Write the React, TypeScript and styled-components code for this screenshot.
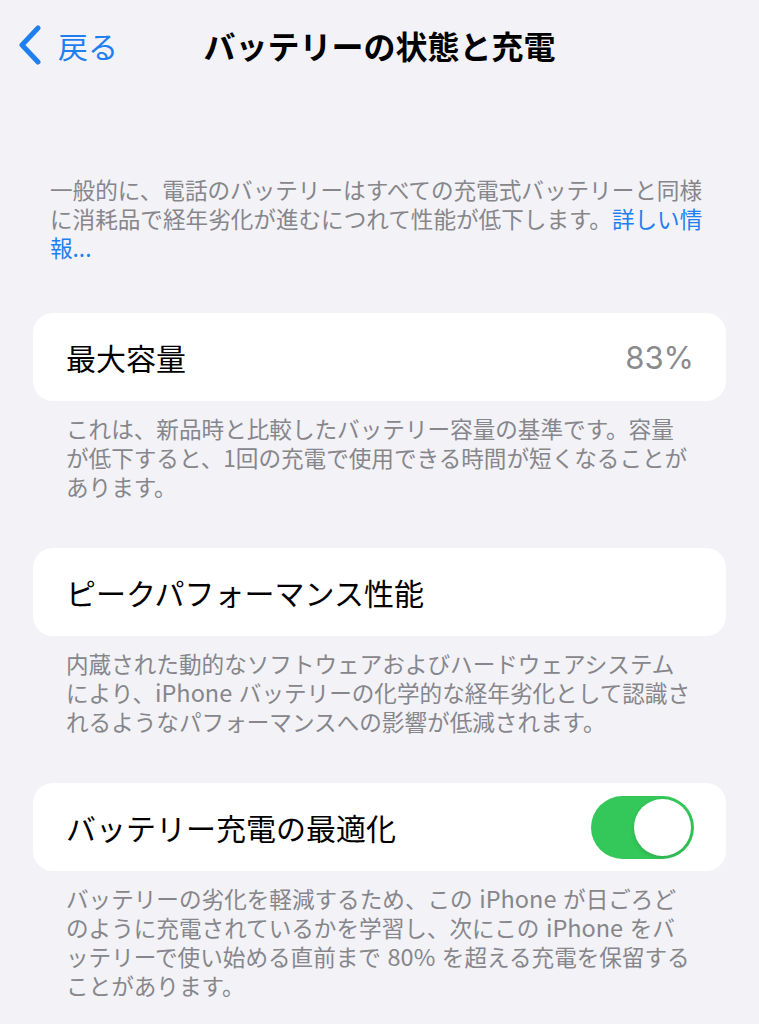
import React from "react";
import styled, { createGlobalStyle } from "styled-components";

const Global = createGlobalStyle`
  html, body {
    margin: 0;
    padding: 0;
    background: #f2f2f7;
  }
  body {
    font-family: "Noto Sans CJK JP", "Noto Sans", sans-serif;
    -webkit-font-smoothing: antialiased;
  }
`;

const Page = styled.div`
  width: 759px;
  min-height: 1024px;
  background: #f2f2f7;
  padding-bottom: 20px;
`;

const NavBar = styled.header`
  height: 90px;
  display: grid;
  grid-template-columns: 1fr auto 1fr;
  align-items: center;
`;

const Back = styled.button`
  justify-self: start;
  display: flex;
  align-items: center;
  gap: 15px;
  padding: 0 0 0 17px;
  margin: 0;
  background: none;
  border: 0;
  color: #1f7ff0;
  font-family: inherit;
  font-size: 30px;
  line-height: 1;
  cursor: pointer;
`;

const Title = styled.h1`
  margin: 0;
  font-size: 32px;
  font-weight: 700;
  color: #000;
  line-height: 1;
`;

const Intro = styled.p`
  margin: 85px 0 0;
  padding: 0 50px;
  font-size: 22.6px;
  line-height: 29px;
  color: #86868b;
`;

const Link = styled.a`
  color: #1f7ff0;
  text-decoration: none;
`;

const Sections = styled.main`
  margin-top: 51px;
  display: flex;
  flex-direction: column;
  gap: 47px;
`;

const Section = styled.section`
  display: flex;
  flex-direction: column;
`;

const Card = styled.div`
  margin: 0 33px;
  height: 88px;
  background: #fff;
  border-radius: 20px;
  padding: 0 32px 0 33px;
  display: flex;
  align-items: center;
  justify-content: space-between;
  font-size: 30px;
  color: #000;
`;

const Value = styled.span`
  color: #8a8a8e;
  font-family: Inter, "Liberation Sans", sans-serif;
  font-size: 31px;
  font-weight: 400;
`;

const Footer = styled.p`
  margin: 13px 0 0;
  padding: 0 66px;
  font-size: 22.6px;
  line-height: 29px;
  color: #86868b;
`;

const Latin = styled.span<{ $afterPunct?: boolean }>`
  margin: 0 0.28em 0 ${(p) => (p.$afterPunct ? "0" : "0.28em")};
  font-size: 23.5px;
`;

const Toggle = styled.span<{ $on: boolean }>`
  width: 103px;
  height: 63px;
  border-radius: 32px;
  background: ${(p) => (p.$on ? "#34c759" : "#e9e9ea")};
  display: flex;
  align-items: center;
  justify-content: ${(p) => (p.$on ? "flex-end" : "flex-start")};
  padding: 3px;
  box-sizing: border-box;
`;

const Knob = styled.span`
  width: 57px;
  height: 57px;
  border-radius: 50%;
  background: #fff;
  box-shadow: 0 2px 4px rgba(0, 0, 0, 0.12);
`;

const Chevron = () => (
  <svg width="26" height="40" viewBox="0 0 26 40" aria-hidden="true">
    <path
      d="M21 3 L5 20 L21 37"
      fill="none"
      stroke="#1f7ff0"
      strokeWidth="5"
      strokeLinecap="round"
      strokeLinejoin="round"
    />
  </svg>
);

export default function App() {
  return (
    <Page>
      <Global />
      <NavBar>
        <Back>
          <Chevron />
          戻る
        </Back>
        <Title>バッテリーの状態と充電</Title>
        <span />
      </NavBar>
      <Intro>
        一般的に、電話のバッテリーはすべての充電式バッテリーと同様に消耗品で経年劣化が進むにつれて性能が低下します。
        <Link>詳しい情報...</Link>
      </Intro>
      <Sections>
        <Section>
          <Card>
            最大容量
            <Value>83%</Value>
          </Card>
          <Footer>
            これは、新品時と比較したバッテリー容量の基準です。容量が低下すると、1回の充電で使用できる時間が短くなることがあります。
          </Footer>
        </Section>
        <Section>
          <Card>ピークパフォーマンス性能</Card>
          <Footer>
            内蔵された動的なソフトウェアおよびハードウェアシステムにより、
            <Latin $afterPunct>iPhone</Latin>
            バッテリーの化学的な経年劣化として認識されるようなパフォーマンスへの影響が低減されます。
          </Footer>
        </Section>
        <Section>
          <Card>
            バッテリー充電の最適化
            <Toggle $on>
              <Knob />
            </Toggle>
          </Card>
          <Footer>
            バッテリーの劣化を軽減するため、この<Latin>iPhone</Latin>
            が日ごろどのように充電されているかを学習し、次にこの<Latin>iPhone</Latin>
            をバッテリーで使い始める直前まで<Latin>80%</Latin>
            を超える充電を保留することがあります。
          </Footer>
        </Section>
      </Sections>
    </Page>
  );
}
